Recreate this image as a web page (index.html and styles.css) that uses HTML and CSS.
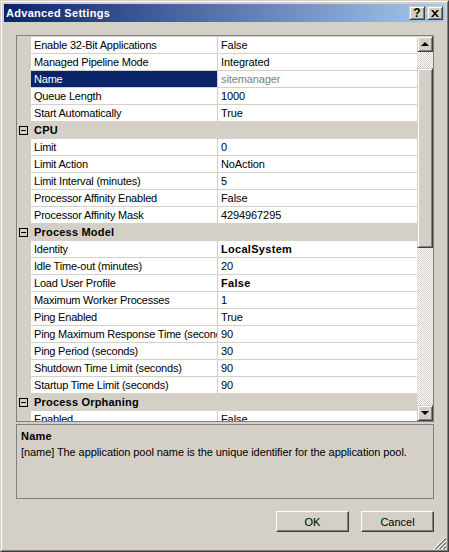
FILE: index.html
```html
<!DOCTYPE html>
<html lang="en">
  <head>
    <meta charset="UTF-8" />
    <title>Advanced Settings</title>
    <link rel="stylesheet" href="styles.css">
  </head>
  <body>
    <div class="window">
      <div class="frame">
        <div class="titlebar">
          <span class="title">Advanced Settings</span>
          <div class="caption-buttons">
            <span class="cap help">?</span>
            <span class="cap">
              <svg width="8" height="7" viewBox="0 0 8 7">
                <path d="M0 0h2l2 2.2L6 0h2L5 3.5 8 7H6L4 4.8 2 7H0l3-3.5z" fill="#000" />
              </svg>
            </span>
          </div>
        </div>

        <div class="content">
          <div class="grid">
            <div class="rows">
              <div class="row"><span class="margin"></span><span class="name">Enable 32-Bit Applications</span><span class="value">False</span></div>
              <div class="row"><span class="margin"></span><span class="name">Managed Pipeline Mode</span><span class="value">Integrated</span></div>
              <div class="row"><span class="margin"></span><span class="name selected">Name</span><span class="value readonly">sitemanager</span></div>
              <div class="row"><span class="margin"></span><span class="name">Queue Length</span><span class="value">1000</span></div>
              <div class="row"><span class="margin"></span><span class="name">Start Automatically</span><span class="value">True</span></div>
              <div class="row cat"><span class="margin"><i class="minus"></i></span><span class="name">CPU</span></div>
              <div class="row"><span class="margin"></span><span class="name">Limit</span><span class="value">0</span></div>
              <div class="row"><span class="margin"></span><span class="name">Limit Action</span><span class="value">NoAction</span></div>
              <div class="row"><span class="margin"></span><span class="name">Limit Interval (minutes)</span><span class="value">5</span></div>
              <div class="row"><span class="margin"></span><span class="name">Processor Affinity Enabled</span><span class="value">False</span></div>
              <div class="row"><span class="margin"></span><span class="name">Processor Affinity Mask</span><span class="value">4294967295</span></div>
              <div class="row cat"><span class="margin"><i class="minus"></i></span><span class="name">Process Model</span></div>
              <div class="row"><span class="margin"></span><span class="name">Identity</span><span class="value changed">LocalSystem</span></div>
              <div class="row"><span class="margin"></span><span class="name">Idle Time-out (minutes)</span><span class="value">20</span></div>
              <div class="row"><span class="margin"></span><span class="name">Load User Profile</span><span class="value changed">False</span></div>
              <div class="row"><span class="margin"></span><span class="name">Maximum Worker Processes</span><span class="value">1</span></div>
              <div class="row"><span class="margin"></span><span class="name">Ping Enabled</span><span class="value">True</span></div>
              <div class="row"><span class="margin"></span><span class="name">Ping Maximum Response Time (seconds)</span><span class="value">90</span></div>
              <div class="row"><span class="margin"></span><span class="name">Ping Period (seconds)</span><span class="value">30</span></div>
              <div class="row"><span class="margin"></span><span class="name">Shutdown Time Limit (seconds)</span><span class="value">90</span></div>
              <div class="row"><span class="margin"></span><span class="name">Startup Time Limit (seconds)</span><span class="value">90</span></div>
              <div class="row cat"><span class="margin"><i class="minus"></i></span><span class="name">Process Orphaning</span></div>
              <div class="row"><span class="margin"></span><span class="name">Enabled</span><span class="value">False</span></div>
            </div>
            <div class="scrollbar">
              <span class="sb-btn"><i class="arrow up"></i></span>
              <span class="track top"></span>
              <span class="thumb"></span>
              <span class="track"></span>
              <span class="sb-btn"><i class="arrow down"></i></span>
            </div>
          </div>

          <div class="desc">
            <div class="desc-title">Name</div>
            <div class="desc-text">[name] The application pool name is the unique identifier for the application pool.</div>
          </div>

          <div class="actions">
            <button type="button">OK</button>
            <button type="button">Cancel</button>
          </div>
        </div>

        <svg class="grip" width="13" height="13" viewBox="0 0 13 13" shape-rendering="crispEdges">
          <path d="M1 13L13 1" stroke="#fff" />
          <path d="M2 13L13 2M3 13L13 3" stroke="#808080" />
          <path d="M5 13L13 5" stroke="#fff" />
          <path d="M6 13L13 6M7 13L13 7" stroke="#808080" />
          <path d="M9 13L13 9" stroke="#fff" />
          <path d="M10 13L13 10M11 13L13 11" stroke="#808080" />
        </svg>
      </div>
    </div>
  </body>
</html>
```

FILE: styles.css
```css
body {
  margin: 0;
  font-family: "Liberation Sans", Arial, sans-serif;
  font-size: 11px;
  background-color: #d4d0c8;
}
.window {
  width: 449px;
  height: 552px;
  box-sizing: border-box;
  border: 1px solid;
  border-color: #d4d0c8 #404040 #404040 #d4d0c8;
}
.frame {
  position: relative;
  height: 100%;
  box-sizing: border-box;
  border: 1px solid;
  border-color: #fff #808080 #808080 #fff;
  padding: 2px;
  display: flex;
  flex-direction: column;
}
.titlebar {
  height: 18px;
  display: flex;
  align-items: center;
  justify-content: space-between;
  padding: 0 2px;
  background: linear-gradient(to right, #0a246a, #a6caf0);
}
.title {
  color: #fff;
  font-weight: bold;
  letter-spacing: 0.3px;
}
.caption-buttons {
  display: flex;
  gap: 2px;
}
.cap,
.sb-btn,
.thumb {
  box-sizing: border-box;
  background-color: #d4d0c8;
  border: 1px solid;
  border-color: #d4d0c8 #404040 #404040 #d4d0c8;
  box-shadow: inset 1px 1px #fff, inset -1px -1px #808080;
}
.cap {
  width: 16px;
  height: 14px;
  display: flex;
  align-items: center;
  justify-content: center;
}
.cap.help {
  font-weight: bold;
  font-size: 12px;
  line-height: 12px;
}
.content {
  flex: 1;
  display: flex;
  flex-direction: column;
  padding: 13px 11px 0 12px;
}
.grid {
  height: 387px;
  box-sizing: border-box;
  border: 1px solid #808080;
  display: flex;
}
.rows {
  flex: 1;
  overflow: hidden;
}
.row {
  height: 17px;
  box-sizing: border-box;
  border-top: 1px solid #d4d0c8;
  display: grid;
  grid-template-columns: 14px 187px 1fr;
  line-height: 16px;
  white-space: nowrap;
}
.margin {
  background-color: #d4d0c8;
  position: relative;
}
.name {
  background-color: #fff;
  border-right: 1px solid #d4d0c8;
  padding-left: 3px;
  overflow: hidden;
  letter-spacing: -0.2px;
}
.name.selected {
  background-color: #0a246a;
  color: #fff;
}
.value {
  background-color: #fff;
  padding-left: 3px;
  overflow: hidden;
  letter-spacing: -0.1px;
}
.value.readonly {
  color: #808080;
}
.value.changed {
  font-weight: bold;
  letter-spacing: 0.3px;
}
.row.cat {
  background-color: #d4d0c8;
}
.row.cat .name {
  grid-column: 2 / 4;
  background: none;
  border-right: none;
  font-weight: bold;
  letter-spacing: 0.2px;
}
.minus {
  position: absolute;
  left: 2px;
  top: 4px;
  width: 9px;
  height: 9px;
  box-sizing: border-box;
  border: 1px solid #000;
}
.minus::after {
  content: "";
  position: absolute;
  left: 1px;
  top: 3px;
  width: 5px;
  height: 1px;
  background-color: #000;
}
.scrollbar {
  width: 16px;
  display: flex;
  flex-direction: column;
}
.sb-btn {
  height: 16px;
  display: flex;
  align-items: center;
  justify-content: center;
}
.arrow {
  width: 0;
  height: 0;
  border-left: 4px solid transparent;
  border-right: 4px solid transparent;
}
.arrow.up {
  border-bottom: 4px solid #000;
  margin-top: -1px;
}
.arrow.down {
  border-top: 4px solid #000;
}
.track {
  flex: 1;
  background-color: #fff;
  background-image: repeating-conic-gradient(#d4d0c8 0 25%, #fff 0 50%);
  background-size: 2px 2px;
}
.track.top {
  flex: none;
  height: 16px;
}
.thumb {
  height: 180px;
}
.desc {
  height: 75px;
  box-sizing: border-box;
  margin-top: 2px;
  border: 1px solid #808080;
  padding: 3px 4px;
  line-height: 16px;
}
.desc-title {
  font-weight: bold;
  letter-spacing: 0.2px;
}
.desc-text {
  letter-spacing: -0.08px;
}
.actions {
  display: flex;
  justify-content: flex-end;
  gap: 12px;
  margin-top: 12px;
}
.actions button {
  width: 73px;
  height: 21px;
  padding: 0;
  font-family: "Liberation Sans", Arial, sans-serif;
  font-size: 11px;
  color: #000;
  background-color: #d4d0c8;
  border: 1px solid;
  border-color: #fff #404040 #404040 #fff;
  box-shadow: inset -1px -1px #808080;
}
.grip {
  position: absolute;
  right: 1px;
  bottom: 1px;
}
```
